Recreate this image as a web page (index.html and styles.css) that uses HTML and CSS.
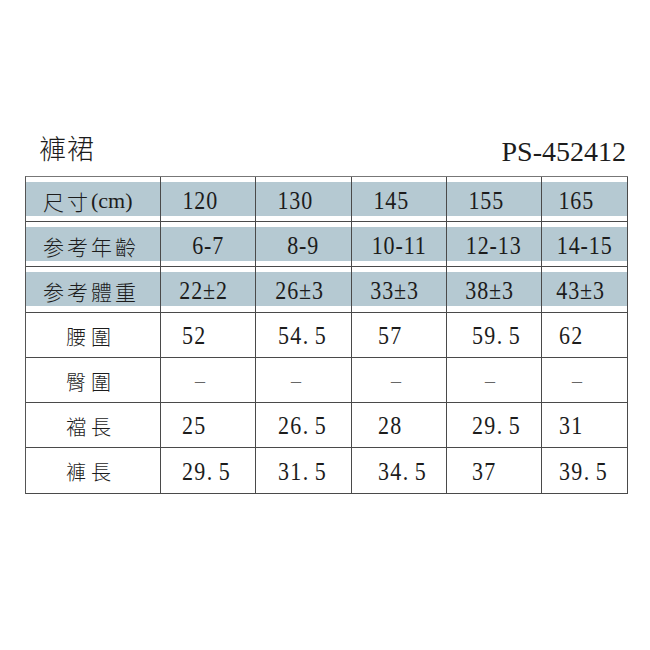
FILE: index.html
```html
<!DOCTYPE html>
<html lang="zh-Hant">
<head>
<meta charset="utf-8">
<title>褲裙 尺寸表</title>
<link rel="stylesheet" href="styles.css">
</head>
<body>
<div class="page">
  <div class="titlebar">
    <div class="title">褲裙</div>
    <div class="code">PS-452412</div>
  </div>
  <div class="grid">
    <div class="cell head"><div class="band label">尺寸<span class="lat">(cm)</span></div></div>
    <div class="cell head r1"><div class="band"><span class="n">120</span></div></div>
    <div class="cell head r1"><div class="band"><span class="n">130</span></div></div>
    <div class="cell head r1"><div class="band"><span class="n">145</span></div></div>
    <div class="cell head r1"><div class="band"><span class="n">155</span></div></div>
    <div class="cell head r1"><div class="band"><span class="n">165</span></div></div>

    <div class="cell head"><div class="band label">参考年齡</div></div>
    <div class="cell head"><div class="band"><span class="n">6-7</span></div></div>
    <div class="cell head"><div class="band"><span class="n">8-9</span></div></div>
    <div class="cell head"><div class="band"><span class="n">10-11</span></div></div>
    <div class="cell head"><div class="band"><span class="n">12-13</span></div></div>
    <div class="cell head"><div class="band"><span class="n">14-15</span></div></div>

    <div class="cell head"><div class="band label">参考體重</div></div>
    <div class="cell head r3"><div class="band"><span class="n">22±2</span></div></div>
    <div class="cell head r3"><div class="band"><span class="n">26±3</span></div></div>
    <div class="cell head r3"><div class="band"><span class="n">33±3</span></div></div>
    <div class="cell head r3"><div class="band"><span class="n">38±3</span></div></div>
    <div class="cell head r3"><div class="band"><span class="n">43±3</span></div></div>

    <div class="cell name">腰圍</div>
    <div class="cell val c2"><span class="n">52</span></div>
    <div class="cell val c3"><span class="n">54<span class="pt">.</span>5</span></div>
    <div class="cell val c4"><span class="n">57</span></div>
    <div class="cell val c5"><span class="n">59<span class="pt">.</span>5</span></div>
    <div class="cell val c6"><span class="n">62</span></div>

    <div class="cell name">臀圍</div>
    <div class="cell val c2"><span class="dash">–</span></div>
    <div class="cell val c3"><span class="dash">–</span></div>
    <div class="cell val c4"><span class="dash">–</span></div>
    <div class="cell val c5"><span class="dash">–</span></div>
    <div class="cell val c6"><span class="dash">–</span></div>

    <div class="cell name">襠長</div>
    <div class="cell val c2"><span class="n">25</span></div>
    <div class="cell val c3"><span class="n">26<span class="pt">.</span>5</span></div>
    <div class="cell val c4"><span class="n">28</span></div>
    <div class="cell val c5"><span class="n">29<span class="pt">.</span>5</span></div>
    <div class="cell val c6"><span class="n">31</span></div>

    <div class="cell name">褲長</div>
    <div class="cell val c2"><span class="n">29<span class="pt">.</span>5</span></div>
    <div class="cell val c3"><span class="n">31<span class="pt">.</span>5</span></div>
    <div class="cell val c4"><span class="n">34<span class="pt">.</span>5</span></div>
    <div class="cell val c5"><span class="n">37</span></div>
    <div class="cell val c6"><span class="n">39<span class="pt">.</span>5</span></div>
  </div>
</div>
</body>
</html>
```

FILE: styles.css
```css
html, body {
  margin: 0;
  padding: 0;
  background: #ffffff;
}

body {
  font-family: "Liberation Serif", "Times New Roman", "DejaVu Serif", serif;
  color: #1c1c1c;
}

.page {
  padding-top: 132px;
}

.titlebar {
  display: flex;
  justify-content: space-between;
  align-items: flex-start;
  margin-left: 39px;
  width: 587px;
  height: 32px;
  margin-bottom: 12px;
}

.title {
  font-family: "Noto Sans CJK TC", sans-serif;
  font-weight: 300;
  font-size: 27px;
  line-height: 32px;
  letter-spacing: 1px;
}

.code {
  font-family: "Liberation Serif", "Times New Roman", "DejaVu Serif", serif;
  font-size: 28px;
  line-height: 32px;
  margin-top: 4px;
}

.grid {
  display: grid;
  grid-template-columns: 135px 95px 96px 95px 95px 86px;
  grid-template-rows: 45px 45px 46px 45px 45px 45px 46px;
  width: 602px;
  margin-left: 25px;
  border-left: 1px solid #555;
  border-top: 1px solid #777;
}

.cell {
  box-sizing: border-box;
  border-right: 1px solid #4a4a4a;
  border-bottom: 1px solid #4a4a4a;
  display: flex;
  align-items: center;
}

.head {
  flex-direction: column;
  align-items: stretch;
  padding-top: 5px;
}

.band {
  height: 34px;
  background: #b5c9d2;
  display: flex;
  align-items: center;
  justify-content: center;
  padding-top: 3px;
  box-sizing: border-box;
}

.r1 .band {
  padding-right: 16px;
}

.r3 .band {
  padding-right: 8px;
}

.band.label {
  justify-content: flex-start;
  padding-left: 17px;
  font-family: "Noto Sans CJK TC", sans-serif;
  font-weight: 300;
  font-size: 21px;
  letter-spacing: 3px;
}

.lat {
  font-family: "Liberation Serif", "Times New Roman", "DejaVu Serif", serif;
  font-size: 22px;
  letter-spacing: 0;
}

.n {
  display: inline-block;
  font-family: "Liberation Serif", "Times New Roman", "DejaVu Serif", serif;
  font-size: 25px;
  line-height: 28px;
  transform: scaleX(0.88);
}

.head .n {
  letter-spacing: 1px;
}

.pt {
  margin-right: 6px;
}

.name {
  justify-content: center;
  padding-right: 4px;
  padding-top: 2px;
  font-family: "Noto Sans CJK TC", sans-serif;
  font-weight: 300;
  font-size: 20px;
  letter-spacing: 5px;
}

.val {
  padding-top: 2px;
}

.val .n {
  transform-origin: left center;
  letter-spacing: 1.5px;
}

.c2 { padding-left: 21px; }
.c3 { padding-left: 22px; }
.c4 { padding-left: 26px; }
.c5 { padding-left: 25px; }
.c6 { padding-left: 17px; }

.dash {
  font-family: "Liberation Serif", "Times New Roman", "DejaVu Serif", serif;
  font-size: 20px;
  color: #666;
  margin-left: 13px;
}
```
